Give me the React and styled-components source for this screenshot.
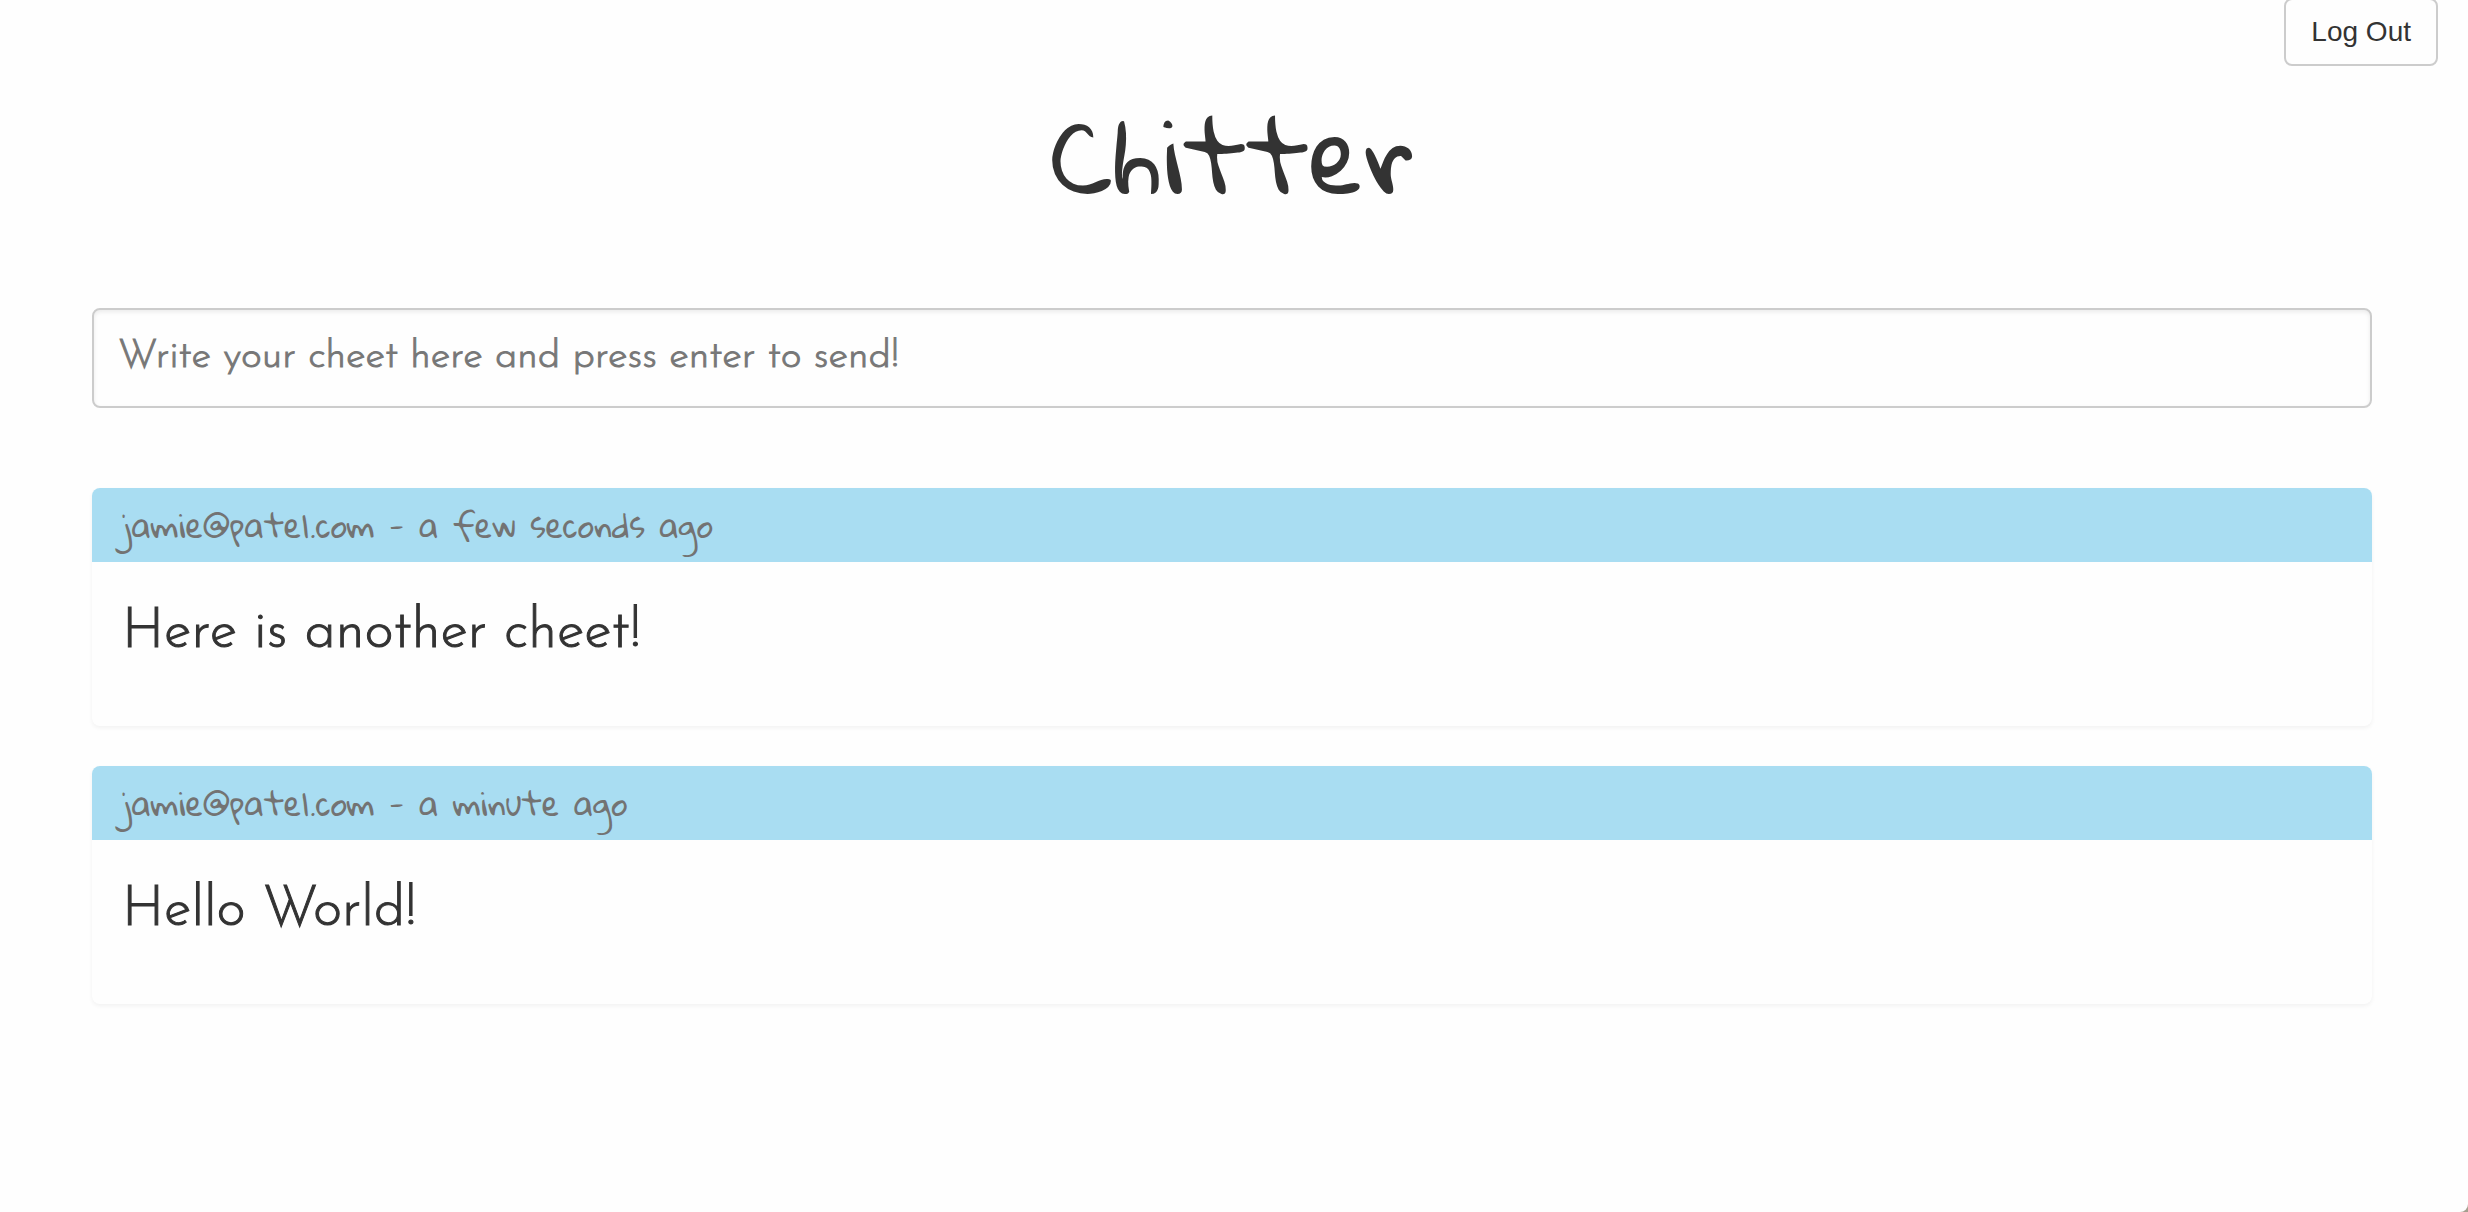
import React, { useState } from "react";
import styled, { createGlobalStyle } from "styled-components";

const GlobalStyle = createGlobalStyle`
  *, *::before, *::after { box-sizing: border-box; }
  html { background: #a59f8f; }
  body { margin: 0; }
`;

const handwriting = `"Gloria Hallelujah", "Indie Flower", Lato, sans-serif`;
const geometric = `"Josefin Sans", Lato, sans-serif`;

const Page = styled.div`
  min-height: 100vh;
  background: #fefefe;
  border-bottom-right-radius: 8px;
  color: #333;
  font-family: ${geometric};
  display: flow-root;
`;

const TopBar = styled.nav`
  display: flex;
  justify-content: flex-end;
  padding-right: 30px;
  margin-top: -2px;
`;

const LogOutButton = styled.button`
  height: 68px;
  padding: 0 25px;
  border: 2px solid #ccc;
  border-radius: 8px;
  background: #fefefe;
  color: #333;
  font: 28px/40px "Liberation Sans", Arial, sans-serif;
  cursor: pointer;
`;

const Main = styled.main`
  padding: 0 96px 60px 92px;
`;

const Title = styled.h1`
  margin: 17px 0 85px;
  font: 500 100px/140px ${handwriting};
  text-align: center;
`;

const CheetInput = styled.input`
  display: block;
  width: 100%;
  height: 100px;
  padding: 0 24px 2px;
  border: 2px solid #ccc;
  border-radius: 8px;
  background: #fefefe;
  box-shadow: inset 0 2px 4px rgba(0, 0, 0, 0.08);
  color: #333;
  font: 300 40px/48px ${geometric};
  -webkit-text-stroke: 1px;

  &::placeholder {
    color: #777;
    opacity: 1;
  }
`;

const CheetList = styled.section`
  display: grid;
  gap: 40px;
  margin-top: 80px;
`;

const Card = styled.article`
  overflow: hidden;
  border-radius: 8px;
  background: #fefefe;
  box-shadow: 0 2px 4px rgba(0, 0, 0, 0.05);
`;

const CardHeader = styled.header`
  padding: 13px 30px;
  background: #a9ddf2;
  color: #737373;
  font: 400 32px/48px ${handwriting};
`;

const CardBody = styled.p`
  margin: 0;
  padding: 35px 30px 57px;
  font: 300 56px/72px ${geometric};
  -webkit-text-stroke: 1px;
`;

const cheets = [
  { author: "jamie@patel.com", when: "a few seconds ago", text: "Here is another cheet!" },
  { author: "jamie@patel.com", when: "a minute ago", text: "Hello World!" },
];

export default function App() {
  const [draft, setDraft] = useState("");
  return (
    <Page>
      <GlobalStyle />
      <TopBar>
        <LogOutButton type="button">Log Out</LogOutButton>
      </TopBar>
      <Main>
        <Title>Chitter</Title>
        <CheetInput
          type="text"
          aria-label="Write your cheet"
          placeholder="Write your cheet here and press enter to send!"
          value={draft}
          onChange={(event) => setDraft(event.target.value)}
        />
        <CheetList>
          {cheets.map((cheet) => (
            <Card key={cheet.text}>
              <CardHeader>{`${cheet.author} - ${cheet.when}`}</CardHeader>
              <CardBody>{cheet.text}</CardBody>
            </Card>
          ))}
        </CheetList>
      </Main>
    </Page>
  );
}
